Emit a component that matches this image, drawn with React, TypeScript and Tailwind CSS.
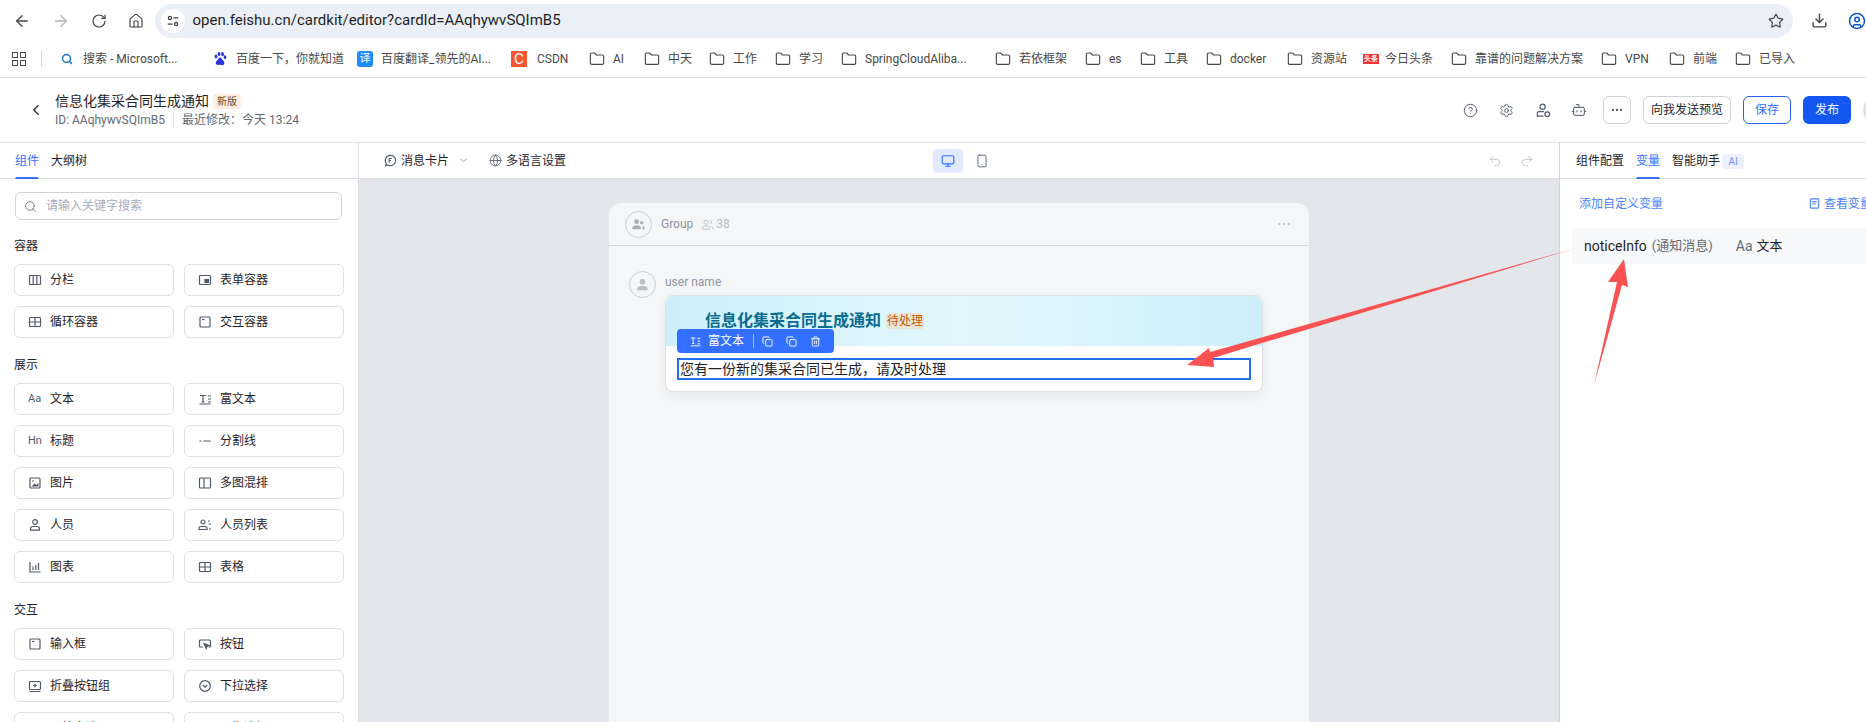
import {
  ArrowLeft,
  ArrowRight,
  ChevronDown,
  ChevronLeft,
  CircleHelp,
  CircleUser,
  Copy,
  Download,
  Ellipsis,
  Folder,
  Globe,
  Home,
  Monitor,
  Plus,
  Redo2,
  RotateCw,
  Search,
  Settings,
  Bot,
  Smartphone,
  Star,
  Trash2,
  Undo2,
} from "lucide-react"
import type { ReactNode } from "react"

type Bookmark = { label: string; box: string; icon?: ReactNode; text?: string }

const folder = <Folder className="w-4 h-4 shrink-0 text-[#474747]" strokeWidth={1.7} />

const bookmarks: Bookmark[] = [
  { label: "搜索 - Microsoft...", box: "w-[153px]", icon: <Search className="w-3 h-3 ml-0.5 mr-0.5 text-[#1a6fc9]" strokeWidth={3} /> },
  {
    label: "百度一下，你就知道",
    box: "w-[145px]",
    icon: (
      <svg viewBox="0 0 16 16" className="w-4 h-4 text-[#2932e1]" fill="currentColor">
        <ellipse cx="4" cy="5.5" rx="1.4" ry="2" />
        <ellipse cx="7" cy="3" rx="1.4" ry="2.1" />
        <ellipse cx="10.5" cy="3.2" rx="1.4" ry="2.1" />
        <ellipse cx="13" cy="6.2" rx="1.3" ry="1.9" />
        <path d="M8.3 6.6c-1.6 0-2 1.7-3.2 2.8-1.2 1-1.6 2-1.2 3.2.4 1.2 1.5 1.6 2.4 1.4 1-.2 1.3-.3 2-.2 1 .1 1.7.6 2.8.2 1.3-.5 1.6-2 1-3.2-.5-1-1.2-1.2-1.9-2.2-.6-1-1-2-1.9-2z" />
      </svg>
    ),
  },
  {
    label: "百度翻译_领先的AI...",
    box: "w-[154px]",
    icon: <span className="w-4 h-4 rounded-[3px] bg-[#1d8cf8] text-white text-[11px] leading-4 text-center">译</span>,
  },
  {
    label: "CSDN",
    box: "w-[78px]",
    icon: <span className="w-4 h-4 mr-0.5 bg-[#fc5531] text-white text-[15px] leading-4 text-center">C</span>,
  },
  { label: "AI", box: "w-[55px]" },
  { label: "中天", box: "w-[65px]" },
  { label: "工作", box: "w-[66px]" },
  { label: "学习", box: "w-[66px]" },
  { label: "SpringCloudAliba...", box: "w-[154px]" },
  { label: "若依框架", box: "w-[90px]" },
  { label: "es", box: "w-[55px]" },
  { label: "工具", box: "w-[66px]" },
  { label: "docker", box: "w-[81px]" },
  { label: "资源站", box: "w-[76px]" },
  {
    label: "今日头条",
    box: "w-[88px]",
    icon: <span className="w-4 h-[10px] mr-[-2px] bg-[#f0323c] text-white text-[7px] leading-[10px] text-center font-bold">头条</span>,
  },
  { label: "靠谱的问题解决方案", box: "w-[150px]" },
  { label: "VPN", box: "w-[68px]" },
  { label: "前端", box: "w-[66px]" },
  { label: "已导入", box: "w-[80px]" },
]

function CompIcon({ name }: { name: string }) {
  const cls = "w-[14px] h-[14px] shrink-0 text-[#4e5969]"
  const s = { fill: "none", stroke: "currentColor", strokeWidth: 1.2 }
  switch (name) {
    case "分栏":
      return (
        <svg viewBox="0 0 14 14" className={cls} {...s}>
          <rect x="1.5" y="2.5" width="11" height="9" rx="1" />
          <path d="M5.2 2.5v9M8.8 2.5v9" />
        </svg>
      )
    case "表单容器":
      return (
        <svg viewBox="0 0 14 14" className={cls} {...s}>
          <rect x="1.5" y="2.5" width="11" height="9" rx="1" />
          <rect x="7" y="6.5" width="3.5" height="3" fill="currentColor" />
        </svg>
      )
    case "循环容器":
    case "表格":
      return (
        <svg viewBox="0 0 14 14" className={cls} {...s}>
          <rect x="1.5" y="2.5" width="11" height="9" rx="1" />
          <path d="M1.5 7h11M7 2.5v9" />
        </svg>
      )
    case "交互容器":
    case "输入框":
      return (
        <svg viewBox="0 0 14 14" className={cls} {...s}>
          <rect x="2" y="2" width="10" height="10" rx="1" />
          <path d="M4 4.5h2.5" />
        </svg>
      )
    case "文本":
      return <span className="w-[14px] shrink-0 text-[#4e5969] text-[11px] leading-[14px]">Aa</span>
    case "富文本":
      return (
        <svg viewBox="0 0 14 14" className={cls} {...s}>
          <path d="M2 3.5h6M5 3.5v6.5M3.5 10h3M10 4h3M10 7h3M10 10h3M1.5 12h11" />
        </svg>
      )
    case "标题":
      return <span className="w-[14px] shrink-0 text-[#4e5969] text-[11px] leading-[14px]">Hn</span>
    case "分割线":
      return (
        <svg viewBox="0 0 14 14" className={cls} {...s}>
          <path d="M1.5 7h2M5.5 7h7" />
        </svg>
      )
    case "图片":
      return (
        <svg viewBox="0 0 14 14" className={cls} {...s}>
          <rect x="2" y="2" width="10" height="10" rx="1" />
          <path d="M3.5 10.5l3-3 2 1.5 2-2v3.5z" fill="currentColor" stroke="none" />
          <circle cx="5" cy="5" r=".8" fill="currentColor" stroke="none" />
        </svg>
      )
    case "多图混排":
      return (
        <svg viewBox="0 0 14 14" className={cls} {...s}>
          <rect x="1.5" y="2" width="11" height="10" rx="1" />
          <path d="M6 2v10" />
        </svg>
      )
    case "人员":
      return (
        <svg viewBox="0 0 14 14" className={cls} {...s}>
          <circle cx="7" cy="4" r="2.3" />
          <path d="M2.5 12.2v-1.4c0-1.4 1-2.3 2.3-2.3h4.4c1.3 0 2.3.9 2.3 2.3v1.4z" />
        </svg>
      )
    case "人员列表":
      return (
        <svg viewBox="0 0 14 14" className={cls} {...s}>
          <circle cx="5" cy="4" r="2" />
          <path d="M1 11.5v-1c0-1.2.9-2 2-2h4c1.1 0 2 .8 2 2v1z" />
          <path d="M10 3h2M10.500 6h2.500M11 11h2" />
        </svg>
      )
    case "图表":
      return (
        <svg viewBox="0 0 14 14" className={cls} {...s}>
          <path d="M2 2v10h10.500M5 6.500v3.500M7.800 5v5M10.500 3v7" />
        </svg>
      )
    case "按钮":
      return (
        <svg viewBox="0 0 14 14" className={cls} {...s}>
          <path d="M5 10H2.500a1 1 0 0 1-1-1V4a1 1 0 0 1 1-1h9a1 1 0 0 1 1 1v5a1 1 0 0 1-1 1h-1" />
          <path d="M6 6.500l5 2-2 .8-.8 2.200z" fill="currentColor" />
        </svg>
      )
    case "折叠按钮组":
      return (
        <svg viewBox="0 0 14 14" className={cls} {...s}>
          <rect x="1.500" y="2.500" width="11" height="8" rx="1" />
          <path d="M5 6.500h4M7 4.500v4M1.500 12.500h11" />
        </svg>
      )
    case "下拉选择":
      return (
        <svg viewBox="0 0 14 14" className={cls} {...s}>
          <circle cx="7" cy="7" r="5.300" />
          <path d="M4.800 6l2.200 2.200L9.200 6" />
        </svg>
      )
    default:
      return (
        <svg viewBox="0 0 14 14" className={cls} {...s}>
          <rect x="2" y="3" width="10" height="9" rx="1" />
          <path d="M2 6h10" />
        </svg>
      )
  }
}

const sections = [
  { title: "容器", items: ["分栏", "表单容器", "循环容器", "交互容器"] },
  { title: "展示", items: ["文本", "富文本", "标题", "分割线", "图片", "多图混排", "人员", "人员列表", "图表", "表格"] },
  { title: "交互", items: ["输入框", "按钮", "折叠按钮组", "下拉选择", "下拉多选", "日期选择器"] },
]

function BrowserBar() {
  return (
    <div className="shrink-0 h-[78px] border-b border-[#e0e0e0] bg-white">
      <div className="flex items-center h-[40px] pt-[1px]">
        <div className="flex items-center w-[155px] pl-[13px] gap-[21px] text-[#474747]">
          <ArrowLeft className="w-[18px] h-[18px]" strokeWidth={1.8} />
          <ArrowRight className="w-[18px] h-[18px] text-[#b5b5b5]" strokeWidth={1.8} />
          <RotateCw className="w-4 h-4" strokeWidth={1.8} />
          <Home className="w-4 h-4" strokeWidth={1.8} />
        </div>
        <div className="flex items-center w-[1644px] h-[34px] rounded-full bg-[#ebf0f8] pl-[6px] pr-[9px]">
          <div className="flex items-center justify-center w-6 h-6 rounded-full bg-white">
            <svg viewBox="0 0 16 16" className="w-[14px] h-[14px] text-[#474747]" fill="none" stroke="currentColor" strokeWidth="1.500">
              <circle cx="4.500" cy="4.500" r="1.800" />
              <path d="M8.500 4.500H14M2 11.500h5.500" />
              <circle cx="11.500" cy="11.500" r="1.800" />
            </svg>
          </div>
          <span className="ml-2 text-[15px] text-[#1f1f1f]">open.feishu.cn/cardkit/editor?cardId=AAqhywvSQImB5</span>
          <Star className="ml-auto w-4 h-4 text-[#474747]" strokeWidth={1.800} />
        </div>
        <Download className="ml-[18px] w-[17px] h-[17px] text-[#474747]" strokeWidth={2} />
        <CircleUser className="ml-5 w-[18px] h-[18px] shrink-0 text-[#0b57d0]" strokeWidth={2} />
      </div>
      <div className="flex items-center h-[37px] pl-[12px] text-[12px] text-[#474747] whitespace-nowrap">
        <div className="grid grid-cols-2 gap-[2px] w-[14px] h-[14px] shrink-0">
          <span className="border-[1.500px] border-[#474747]" />
          <span className="border-[1.500px] border-[#474747]" />
          <span className="border-[1.500px] border-[#474747]" />
          <span className="border-[1.500px] border-[#474747]" />
        </div>
        <span className="ml-[15px] mr-[17px] w-px h-4 bg-[#c7d7ef]" />
        {bookmarks.map((b) => (
          <div key={b.label} className={`flex items-center gap-2 shrink-0 ${b.box}`}>
            {b.icon ?? folder}
            <span>{b.label}</span>
          </div>
        ))}
      </div>
    </div>
  )
}

function AppHeader() {
  return (
    <div className="shrink-0 flex items-center h-[65px] border-b border-[#dee0e3] bg-white pl-[27px] whitespace-nowrap">
      <ChevronLeft className="w-[18px] h-[18px] text-[#1f2329]" strokeWidth={1.500} />
      <div className="ml-[10px]">
        <div className="flex items-center h-5">
          <span className="text-[14px] text-[#1f2329]">信息化集采合同生成通知</span>
          <span className="ml-1 px-1 h-[15px] rounded-[3px] bg-[#fdeee0] text-[10px] leading-[15px] text-[#7a4a1a]">新版</span>
        </div>
        <div className="flex items-center h-[17px] text-[12px] text-[#646a73]">
          <span>ID: AAqhywvSQImB5</span>
          <span className="mx-2 w-px h-3 bg-[#dee0e3]" />
          <span>最近修改：今天 13:24</span>
        </div>
      </div>
      <div className="ml-auto flex items-center text-[#4e5969]">
        <CircleHelp className="w-[15px] h-[15px]" strokeWidth={1.500} />
        <Settings className="ml-[21px] w-[15px] h-[15px]" strokeWidth={1.500} />
        <svg viewBox="0 0 16 16" className="ml-[22px] w-[15px] h-[15px]" fill="none" stroke="currentColor" strokeWidth="1.300">
          <circle cx="7" cy="4" r="2.800" />
          <path d="M8.500 9.300H3a1.500 1.500 0 0 0-1.500 1.500v3.200h6.500" />
          <circle cx="12" cy="12" r="2.500" />
        </svg>
        <Bot className="ml-5 w-4 h-4" strokeWidth={1.500} />
        <div className="ml-4 flex items-center justify-center w-[28px] h-[28px] rounded-[6px] border border-[#d0d3d6]">
          <Ellipsis className="w-[14px] h-[14px]" />
        </div>
        <div className="ml-3 flex items-center justify-center w-[88px] h-[28px] rounded-[6px] border border-[#d0d3d6] text-[12px] text-[#1f2329]">向我发送预览</div>
        <div className="ml-3 flex items-center justify-center w-[48px] h-[28px] rounded-[6px] border border-[#2563eb] text-[12px] text-[#3370ff]">保存</div>
        <div className="ml-3 flex items-center justify-center w-[48px] h-[28px] rounded-[6px] bg-[#1456f0] text-[12px] text-white">发布</div>
        <div className="ml-3 w-[28px] h-[28px] shrink-0 rounded-full bg-[#dee0e3] mr-[-25px]" />
      </div>
    </div>
  )
}

function LeftPanel() {
  return (
    <aside className="shrink-0 w-[359px] border-r border-[#dee0e3] bg-white overflow-hidden">
      <div className="flex h-[36px] gap-3 pl-[15px] border-b border-[#dee0e3] text-[12px]">
        <span className="relative flex items-center h-[35px] text-[#3370ff]">
          组件
          <span className="absolute bottom-[-1px] left-0 right-0 h-[2px] rounded-t bg-[#3370ff]" />
        </span>
        <span className="flex items-center h-[35px] text-[#1f2329]">大纲树</span>
      </div>
      <div className="ml-[15px] mt-[13px] flex items-center w-[327px] h-[28px] px-2 gap-[9px] rounded-[6px] border border-[#d0d3d6]">
        <Search className="w-[13px] h-[13px] text-[#646a73]" strokeWidth={1.500} />
        <span className="text-[12px] text-[#a9aeb8]">请输入关键字搜索</span>
      </div>
      <div className="pl-[14px] pt-[17px]">
        {sections.map((sec) => (
          <div key={sec.title} className="mb-[18px]">
            <div className="h-[18px] leading-[18px] text-[12px] text-[#1f2329] mb-[9px]">{sec.title}</div>
            <div className="grid grid-cols-[160px_160px] gap-x-[10px] gap-y-[10px]">
              {sec.items.map((it) => (
                <div key={it} className="flex items-center h-[32px] pl-[13px] gap-[8px] rounded-[6px] border border-[#dee0e3] text-[12px] text-[#1f2329]">
                  <CompIcon name={it} />
                  <span>{it}</span>
                </div>
              ))}
            </div>
          </div>
        ))}
      </div>
    </aside>
  )
}

function Canvas() {
  return (
    <main className="flex-1 flex flex-col min-w-0">
      <div className="shrink-0 relative flex items-center h-[36px] border-b border-[#dee0e3] bg-white pl-[25px] pr-[25px] text-[12px] text-[#1f2329]">
        <svg viewBox="0 0 14 14" className="w-[13px] h-[13px] text-[#4e5969]" fill="none" stroke="currentColor" strokeWidth="1.200">
          <path d="M7 1.500a5.500 5.500 0 1 1-2.700 10.300L1.800 12.500l.6-2.300A5.500 5.500 0 0 1 7 1.500z" />
          <path d="M5.500 4.800h3M5.500 7h2M5.500 4.800v4.500" />
        </svg>
        <span className="ml-[4px]">消息卡片</span>
        <ChevronDown className="ml-[9px] w-[11px] h-[11px] text-[#8f959e]" />
        <Globe className="ml-[20px] w-[13px] h-[13px] text-[#4e5969]" strokeWidth={1.500} />
        <span className="ml-[4px]">多语言设置</span>
        <div className="ml-[367px] flex items-center justify-center w-[30px] h-[24px] rounded-[4px] bg-[#e1eaff]">
          <Monitor className="w-[14px] h-[14px] text-[#3370ff]" strokeWidth={2} />
        </div>
        <Smartphone className="ml-[12px] w-[14px] h-[14px] text-[#4e5969]" strokeWidth={1.500} />
        <div className="ml-auto flex items-center gap-[18px] text-[#bbbfc4]">
          <Undo2 className="w-[14px] h-[14px]" strokeWidth={1.500} />
          <Redo2 className="w-[14px] h-[14px]" strokeWidth={1.500} />
        </div>
      </div>
      <div className="flex-1 bg-[#e3e6eb] pt-[24px] overflow-hidden">
        <div className="mx-auto w-[700px] h-[600px] rounded-t-[12px] bg-[#f5f6f8]">
          <div className="flex items-center h-[43px] pl-[16px] pr-[17px] border-b border-[#d5d8dd]">
            <div className="flex items-center justify-center w-[27px] h-[27px] rounded-full border border-[#c9cdd4]">
              <svg viewBox="0 0 16 16" className="w-[15px] h-[15px] text-[#a9aeb8]" fill="currentColor">
                <circle cx="6" cy="5" r="2.600" />
                <path d="M1.500 13v-1.500C1.500 9.800 3 8.800 6 8.800s4.500 1 4.500 2.700V13z" />
                <circle cx="11.500" cy="6" r="1.800" />
                <path d="M11.500 13h3.200v-1.300c0-1.200-1-1.900-3-2 .6.600.9 1.200.9 2z" />
              </svg>
            </div>
            <span className="ml-[9px] text-[12px] text-[#8f959e]">Group</span>
            <svg viewBox="0 0 14 14" className="ml-[8px] w-[13px] h-[13px] text-[#bbbfc4]" fill="none" stroke="currentColor" strokeWidth="1">
              <circle cx="5.500" cy="4.500" r="2.300" />
              <path d="M1.500 12v-1.300c0-1.300 1-2.200 2.300-2.200h3.400c1.300 0 2.300.9 2.300 2.200V12zM10 2.500a2.200 2.200 0 0 1 0 4M11 8.800c1 .3 1.800 1 1.800 2V12" />
            </svg>
            <span className="ml-[2px] text-[12px] text-[#bbbfc4]">38</span>
            <Ellipsis className="ml-auto w-4 h-4 text-[#bbbfc4]" strokeWidth={1.500} />
          </div>
          <div className="flex pl-[20px] pt-[25px]">
            <div className="flex items-center justify-center w-[27px] h-[27px] shrink-0 rounded-full border border-[#c9cdd4]">
              <svg viewBox="0 0 16 16" className="w-[15px] h-[15px] text-[#bbbfc4]" fill="currentColor">
                <circle cx="8" cy="5" r="3" />
                <path d="M2.500 14v-1.500C2.500 10.500 4.500 9.300 8 9.300s5.500 1.200 5.500 3.200V14z" />
              </svg>
            </div>
            <div className="ml-[9px]">
              <div className="h-[24px] text-[12px] leading-[22px] text-[#8f959e]">user name</div>
              <div className="relative w-[598px] rounded-[8px] border border-[#dee0e3] bg-white shadow-[0_4px_12px_rgba(31,35,41,0.06)] overflow-visible">
                <div className="flex items-center h-[50px] pl-[39px] pb-[1px] rounded-t-[8px] bg-gradient-to-r from-[#ccf0fb] via-[#e4f6fd] to-[#ccf0fb]">
                  <span className="text-[16px] font-bold text-[#0a6c8e]">信息化集采合同生成通知</span>
                  <span className="ml-[5px] w-[38px] h-[16px] rounded-[3px] bg-[#e9e5d6] text-center text-[12px] leading-[16px] text-[#c45a00]">待处理</span>
                </div>
                <div className="absolute left-[11px] top-[33px] flex items-center w-[157px] h-[24px] rounded-[4px] bg-[#3370ff] pl-[13px] text-[12px] text-white">
                  <svg viewBox="0 0 14 14" className="w-[11px] h-[11px]" fill="none" stroke="currentColor" strokeWidth="1.200">
                    <path d="M1 2.500h6M4 2.500v7M2.500 9.500h3M9.500 3H13M9.500 6.500H13M9.500 10H13M1 12.500h12" />
                  </svg>
                  <span className="ml-[7px]">富文本</span>
                  <span className="ml-[9px] w-px h-[14px] bg-white/50" />
                  <Copy className="ml-[8px] w-[11px] h-[11px]" />
                  <Copy className="ml-[13px] w-[11px] h-[11px]" />
                  <Trash2 className="ml-[13px] w-[11px] h-[11px]" />
                </div>
                <div className="px-[11px] pt-[12px] pb-[11px]">
                  <div className="h-[22px] border-2 border-[#1f6ff0] pl-[1px] text-[14px] leading-[18px] text-[#1f2329]">您有一份新的集采合同已生成，请及时处理</div>
                </div>
              </div>
            </div>
          </div>
        </div>
      </div>
    </main>
  )
}

function RightPanel() {
  return (
    <aside className="shrink-0 w-[307px] border-l border-[#d0d3d6] bg-white overflow-hidden whitespace-nowrap">
      <div className="flex h-[36px] pl-[16px] border-b border-[#dee0e3] text-[12px]">
        <span className="flex items-center h-[35px] text-[#1f2329]">组件配置</span>
        <span className="relative ml-3 flex items-center h-[35px] text-[#3370ff]">
          变量
          <span className="absolute bottom-[-1px] left-0 right-0 h-[2px] rounded-t bg-[#3370ff]" />
        </span>
        <span className="ml-3 flex items-center h-[35px] text-[#1f2329]">智能助手</span>
        <span className="ml-[2px] mt-[11px] w-[22px] h-[15px] rounded-[3px] bg-[#eef0fd] text-center text-[10px] leading-[15px] text-[#7b8cf0]">AI</span>
      </div>
      <div className="flex items-center h-[49px] pl-[17px] text-[12px] text-[#4e83fd]">
        <Plus className="w-[11px] h-[11px]" strokeWidth={2} />
        <span className="ml-[2px]">添加自定义变量</span>
        <svg viewBox="0 0 12 12" className="ml-[146px] w-[11px] h-[11px] shrink-0" fill="none" stroke="currentColor" strokeWidth="1.200">
          <rect x="1.500" y="1" width="9" height="10" rx="1" />
          <path d="M3.500 4h5M3.500 6.500h4" />
        </svg>
        <span className="ml-[4px]">查看变量说明</span>
      </div>
      <div className="ml-[12px] flex items-center h-[36px] pl-[12px] rounded-l-[4px] bg-[#f7f8fa]">
        <span className="text-[14px] text-[#1f2329]">noticeInfo</span>
        <span className="ml-[5px] text-[13px] text-[#646a73]">(通知消息)</span>
        <span className="ml-[23px] text-[14px] text-[#646a73]">Aa</span>
        <span className="ml-[4px] text-[13px] text-[#1f2329]">文本</span>
      </div>
    </aside>
  )
}

export default function App() {
  return (
    <div className="relative flex flex-col w-[1866px] h-[722px] overflow-hidden bg-white font-['Roboto','Noto_Sans_CJK_SC',sans-serif]">
      <BrowserBar />
      <AppHeader />
      <div className="flex flex-1 min-h-0">
        <LeftPanel />
        <Canvas />
        <RightPanel />
      </div>
      {/* annotation arrows drawn on the screenshot */}
      <svg className="absolute top-0 left-0 w-[1866px] h-[722px] pointer-events-none" viewBox="0 0 1866 722" fill="#fa5252">
        <polygon points="1576,248 1213,358 1214,367 1187,365 1209,348 1210,352" />
        <polygon points="1594,385 1617,282 1608,282 1624,259 1628,287 1622,285" />
      </svg>
    </div>
  )
}
